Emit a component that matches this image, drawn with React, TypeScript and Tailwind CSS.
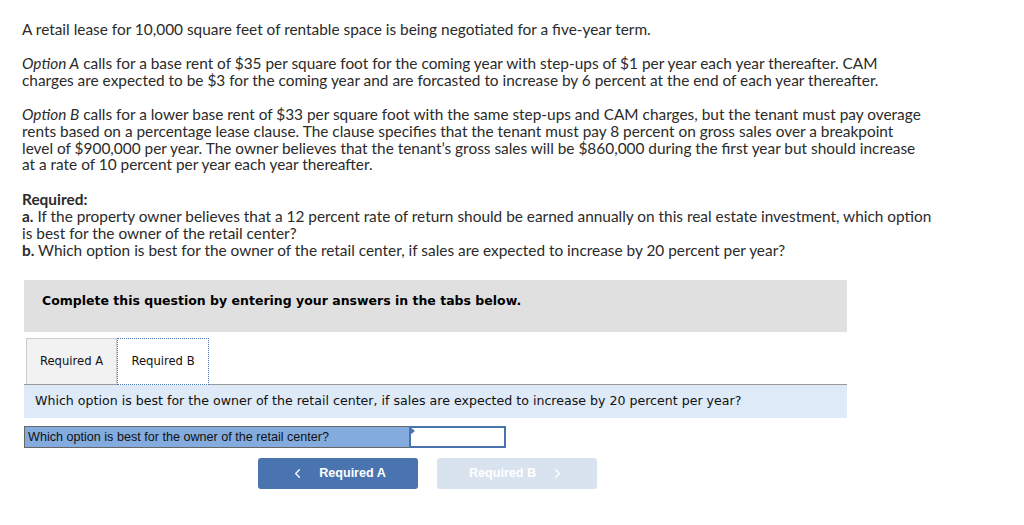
import { ChevronLeft, ChevronRight } from "lucide-react";

const body = { fontFamily: "Lato, 'Open Sans', sans-serif" };
const verdana = { fontFamily: "Verdana, 'DejaVu Sans', sans-serif" };
const arial = { fontFamily: "'Liberation Sans', Arial, sans-serif" };

export default function App() {
  return (
    <div className="w-[1024px] h-[525px] bg-white overflow-hidden">
      <div className="pl-[22px] pt-[21px] text-[15.4px] leading-[16.9px] text-[#2b2b2b]" style={body}>
        <p>A retail lease for 10,000 square feet of rentable space is being negotiated for a five-year term.</p>
        <p className="mt-[17px]">
          <i>Option A</i> calls for a base rent of $35 per square foot for the coming year with step-ups of $1 per year each year thereafter. CAM
          <br />
          charges are expected to be $3 for the coming year and are forcasted to increase by 6 percent at the end of each year thereafter.
        </p>
        <p className="mt-[17px]">
          <i>Option B</i> calls for a lower base rent of $33 per square foot with the same step-ups and CAM charges, but the tenant must pay overage
          <br />
          rents based on a percentage lease clause. The clause specifies that the tenant must pay 8 percent on gross sales over a breakpoint
          <br />
          level of $900,000 per year. The owner believes that the tenant&rsquo;s gross sales will be $860,000 during the first year but should increase
          <br />
          at a rate of 10 percent per year each year thereafter.
        </p>
        <p className="mt-[18px]">
          <b>Required:</b>
          <br />
          <b>a.</b> If the property owner believes that a 12 percent rate of return should be earned annually on this real estate investment, which option
          <br />
          is best for the owner of the retail center?
          <br />
          <b>b.</b> Which option is best for the owner of the retail center, if sales are expected to increase by 20 percent per year?
        </p>
      </div>

      <div className="ml-[24px] w-[823px]">
        <div className="mt-[21px] h-[52px] bg-[#e0e0e0] flex items-center pl-[18px] pb-[9px]">
          <span className="font-bold text-[12.5px] text-black" style={verdana}>
            Complete this question by entering your answers in the tabs below.
          </span>
        </div>

        <div className="mt-[6px] flex pl-[2px] border-b border-[#999]">
          <div className="w-[91px] h-[46px] bg-[#f2f2f2] border border-b-0 border-[#ccc] flex items-center justify-center text-[11.6px] text-[#111]" style={verdana}>
            Required A
          </div>
          <div className="w-[92px] h-[47px] -mb-px bg-white border border-dotted border-[#4a74b0] flex items-center justify-center text-[11.6px] text-[#111]" style={verdana}>
            Required B
          </div>
        </div>

        <div className="h-[33px] bg-[#deeaf7] flex items-center pl-[11px] text-[12.6px] text-[#111]" style={verdana}>
          Which option is best for the owner of the retail center, if sales are expected to increase by 20 percent per year?
        </div>

        <div className="mt-[8px] flex h-[22px]">
          <div className="w-[385px] bg-[#84abdd] border border-[#666] border-r-0 flex items-center pl-[3px] text-[12.6px] text-[#111]" style={arial}>
            Which option is best for the owner of the retail center?
          </div>
          <div className="relative w-[97px] bg-white border-2 border-[#4a73ad]">
            <span className="absolute -left-[1px] -top-[1px] w-0 h-0 border-y-[4px] border-y-transparent border-l-[5px] border-l-[#4a73ad]" />
          </div>
        </div>

        <div className="mt-[10px] flex gap-[19px] pl-[234px]">
          <button className="w-[160px] h-[31px] rounded-[3px] bg-[#4a74b0] text-white font-bold text-[12.6px] flex items-center justify-center gap-[14px]" style={arial}>
            <ChevronLeft size={15} strokeWidth={2} />
            <span>Required A</span>
          </button>
          <button className="w-[160px] h-[31px] rounded-[3px] bg-[#d8e3ef] text-white font-bold text-[12.6px] flex items-center justify-center gap-[14px]" style={arial}>
            <span>Required B</span>
            <ChevronRight size={15} strokeWidth={2} />
          </button>
        </div>
      </div>
    </div>
  );
}
